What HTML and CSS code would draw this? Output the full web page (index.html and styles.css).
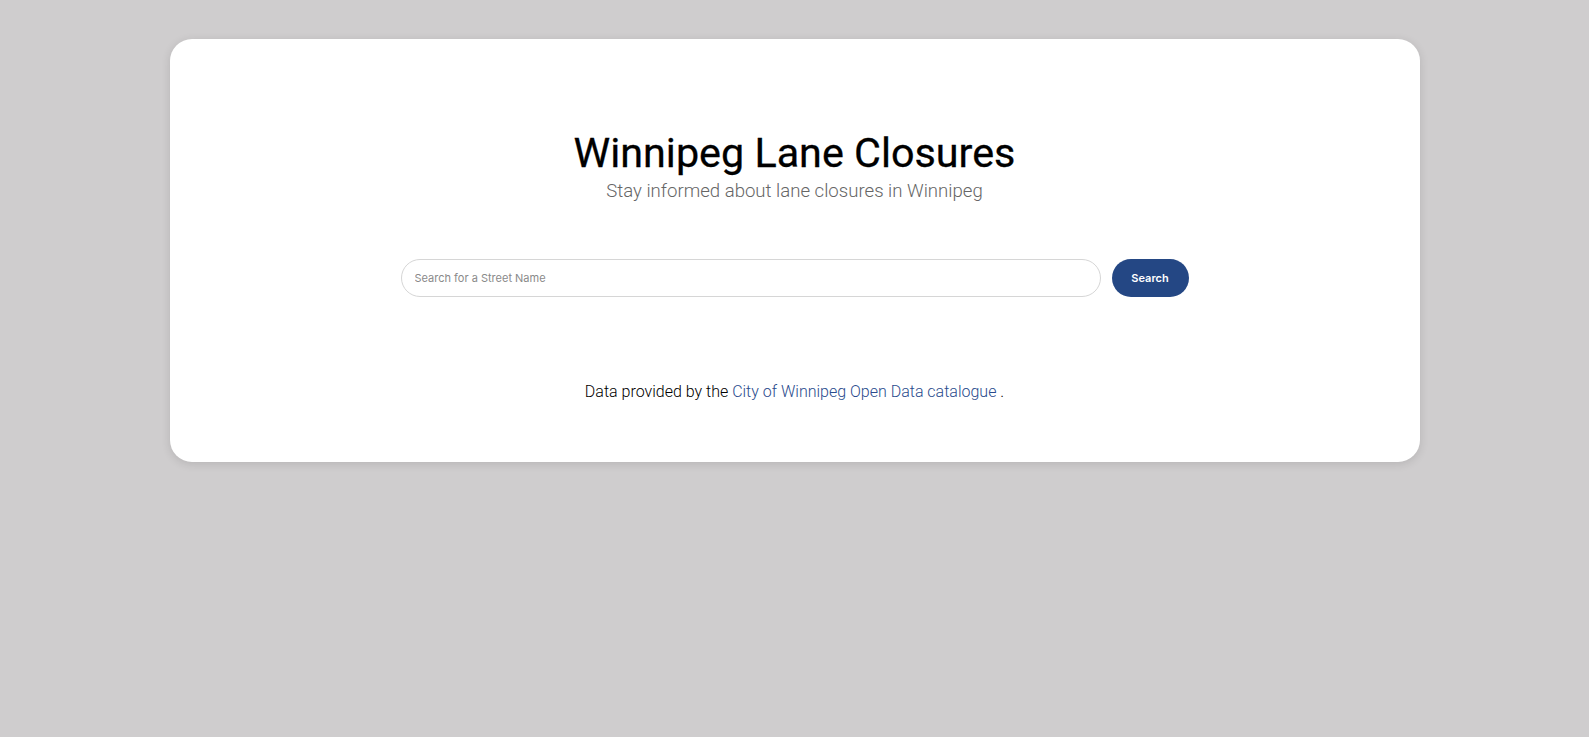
FILE: index.html
```html
<!DOCTYPE html>
<html>
<head>
<meta charset="utf-8">
<link rel="stylesheet" href="styles.css">
</head>
<body>
<main class="card">
  <header class="head">
    <h1 class="title">Winnipeg Lane Closures</h1>
    <p class="subtitle">Stay informed about lane closures in Winnipeg</p>
  </header>
  <form class="search">
    <input class="search-input" type="text" placeholder="Search for a Street Name">
    <button class="search-btn" type="button">Search</button>
  </form>
  <p class="footer">Data provided by the <a class="link" href="#">City of Winnipeg Open Data catalogue</a> .</p>
</main>
</body>
</html>
```
FILE: styles.css
```css
html, body {
  margin: 0;
  padding: 0;
}
body {
  background: #cfcdce;
  min-height: 737px;
  font-family: Roboto, "Liberation Sans", sans-serif;
  padding-top: 39px;
  box-sizing: border-box;
}
.card {
  width: 1250px;
  margin: 0 auto;
  box-sizing: border-box;
  background: #fff;
  border-radius: 22px;
  box-shadow: 0 2px 10px rgba(0,0,0,0.12);
  height: 423px;
  display: flex;
  flex-direction: column;
  align-items: center;
  padding-top: 90px;
}
.head {
  text-align: center;
}
.title {
  margin: 0;
  font-size: 41.3px;
  font-weight: 400;
  color: #000;
  line-height: 48px;
  -webkit-text-stroke: 0.3px #000;
}
.subtitle {
  margin: 3px 0 0;
  font-size: 18.6px;
  font-weight: 300;
  color: #666;
  line-height: 22px;
}
.search {
  margin-top: 57px;
  display: flex;
  gap: 11px;
}
.search-input {
  width: 700px;
  height: 38px;
  box-sizing: border-box;
  border: 1px solid #d6d6d6;
  border-radius: 19px;
  padding: 0 13px;
  font-family: Inter, "Liberation Sans", sans-serif;
  font-size: 11px;
  outline: none;
}
.search-input::placeholder {
  color: #8a8a8a;
}
.search-btn {
  width: 77px;
  height: 38px;
  border: none;
  border-radius: 19px;
  background: #244784;
  color: #fff;
  font-family: Inter, "Liberation Sans", sans-serif;
  font-size: 11px;
  font-weight: 600;
}
.footer {
  margin: 85px 0 0;
  font-size: 16px;
  font-weight: 300;
  color: #000;
}
.link {
  color: #2a4b8d;
  text-decoration: none;
}
```
